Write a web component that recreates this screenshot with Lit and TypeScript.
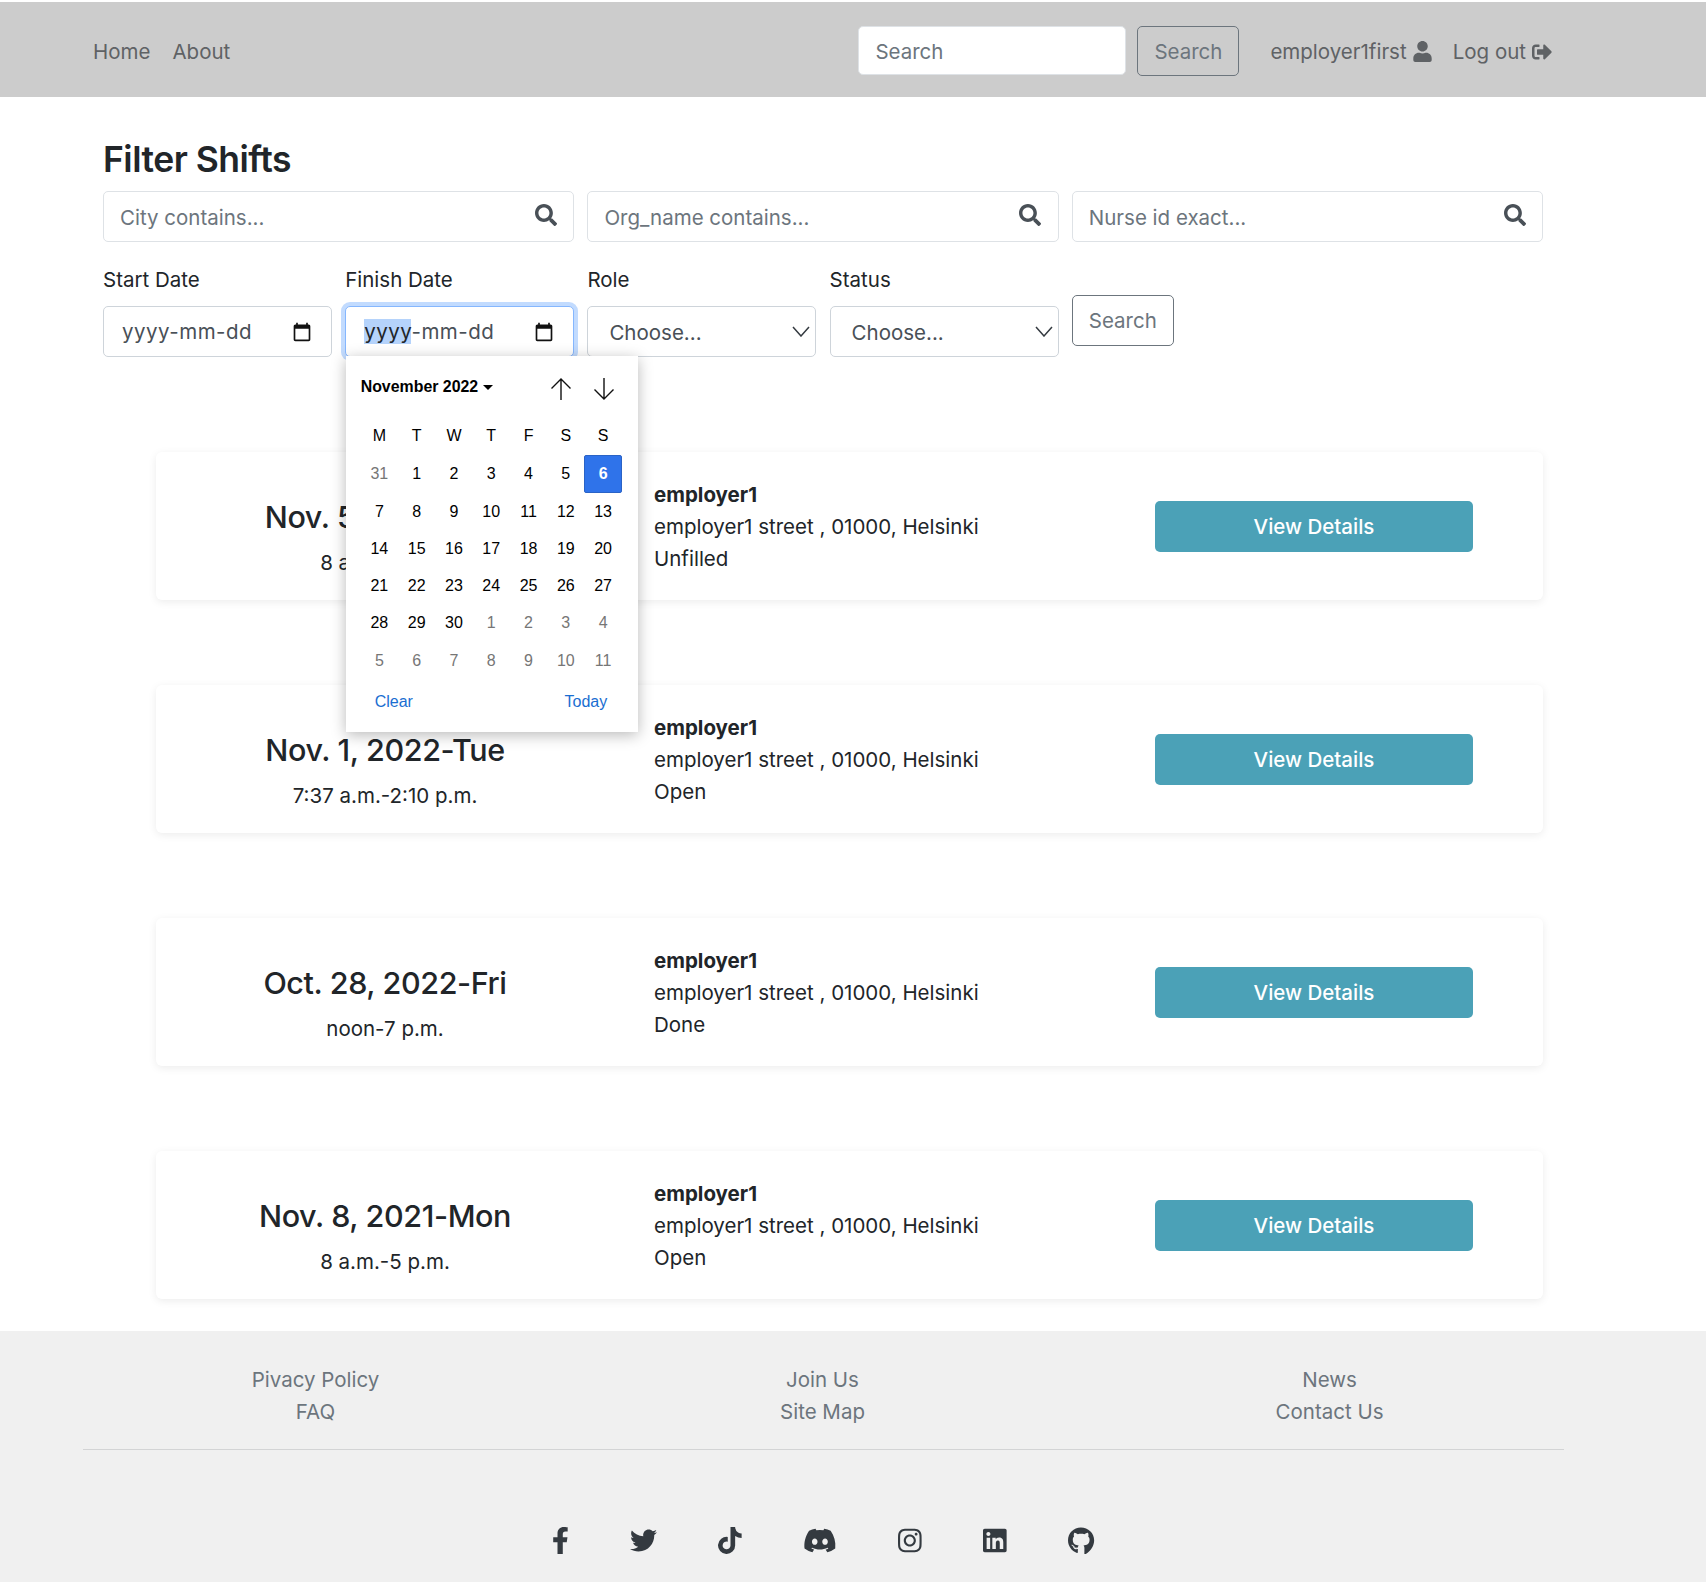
import { LitElement, css, html, svg } from "lit";
import { customElement } from "lit/decorators.js";

const SEARCH_ICON = svg`<path d="M505 442.7L405.3 343c-4.5-4.5-10.6-7-17-7H372c27.6-35.3 44-79.7 44-128C416 93.1 322.9 0 208 0S0 93.1 0 208s93.1 208 208 208c48.3 0 92.7-16.4 128-44v16.3c0 6.4 2.5 12.5 7 17l99.7 99.7c9.4 9.4 24.6 9.4 33.9 0l28.3-28.3c9.4-9.4 9.4-24.6.1-34zM208 336c-70.7 0-128-57.2-128-128 0-70.7 57.2-128 128-128 70.7 0 128 57.2 128 128 0 70.7-57.2 128-128 128z"/>`;

const SOCIALS = [
  { w: 320, d: "M279.14 288l14.22-92.66h-88.91v-60.13c0-25.35 12.42-50.06 52.24-50.06h40.42V6.26S260.43 0 225.36 0c-73.22 0-121.08 44.38-121.08 124.72v70.62H22.89V288h81.39v224h100.17V288z" },
  { w: 512, d: "M459.37 151.716c.325 4.548.325 9.097.325 13.645 0 138.72-105.583 298.558-298.558 298.558-59.452 0-114.68-17.219-161.137-47.106 8.447.974 16.568 1.299 25.34 1.299 49.055 0 94.213-16.568 130.274-44.832-46.132-.975-84.792-31.188-98.112-72.772 6.498.974 12.995 1.624 19.818 1.624 9.421 0 18.843-1.3 27.614-3.573-48.081-9.747-84.143-51.98-84.143-102.985v-1.299c13.969 7.797 30.214 12.67 47.431 13.319-28.264-18.843-46.781-51.005-46.781-87.391 0-19.492 5.197-37.36 14.294-52.954 51.655 63.675 129.3 105.258 216.365 109.807-1.624-7.797-2.599-15.918-2.599-24.04 0-57.828 46.782-104.934 104.934-104.934 30.213 0 57.502 12.67 76.67 33.137 23.715-4.548 46.456-13.32 66.599-25.34-7.798 24.366-24.366 44.833-46.132 57.827 21.117-2.273 41.584-8.122 60.426-16.243-14.292 20.791-32.161 39.308-52.628 54.253z" },
  { w: 448, d: "M448,209.91a210.06,210.06,0,0,1-122.77-39.25V349.38A162.55,162.55,0,1,1,185,188.31V278.2a74.62,74.62,0,1,0,52.23,71.18V0l88,0a121.18,121.18,0,0,0,1.86,22.17h0A122.18,122.18,0,0,0,381,102.39a121.43,121.43,0,0,0,67,20.14Z" },
  { w: 640, d: "M524.531,69.836a1.5,1.5,0,0,0-.764-.7A485.065,485.065,0,0,0,404.081,32.03a1.816,1.816,0,0,0-1.923.91,337.461,337.461,0,0,0-14.9,30.6,447.848,447.848,0,0,0-134.426,0,309.541,309.541,0,0,0-15.135-30.6,1.89,1.89,0,0,0-1.924-.91A483.689,483.689,0,0,0,116.085,69.137a1.712,1.712,0,0,0-.788.676C39.068,183.651,18.186,294.69,28.43,404.354a2.016,2.016,0,0,0,.765,1.375A487.666,487.666,0,0,0,176.02,479.918a1.9,1.9,0,0,0,2.063-.676A348.2,348.2,0,0,0,208.12,430.4a1.86,1.86,0,0,0-1.019-2.588,321.173,321.173,0,0,1-45.868-21.853,1.885,1.885,0,0,1-.185-3.126c3.082-2.309,6.166-4.711,9.109-7.137a1.819,1.819,0,0,1,1.9-.256c96.229,43.917,200.41,43.917,295.5,0a1.812,1.812,0,0,1,1.924.233c2.944,2.426,6.027,4.851,9.132,7.16a1.884,1.884,0,0,1-.162,3.126,301.407,301.407,0,0,1-45.89,21.83,1.875,1.875,0,0,0-1,2.611,391.055,391.055,0,0,0,30.014,48.815,1.864,1.864,0,0,0,2.063.7A486.048,486.048,0,0,0,610.7,405.729a1.882,1.882,0,0,0,.765-1.352C623.729,277.594,590.933,167.465,524.531,69.836ZM222.491,337.58c-28.972,0-52.844-26.587-52.844-59.239S193.056,219.1,222.491,219.1c29.665,0,53.306,26.82,52.843,59.239C275.334,310.993,251.924,337.58,222.491,337.58Zm195.38,0c-28.971,0-52.843-26.587-52.843-59.239S388.437,219.1,417.871,219.1c29.667,0,53.307,26.82,52.844,59.239C470.715,310.993,447.538,337.58,417.871,337.58Z" },
  { w: 448, d: "M224.1 141c-63.6 0-114.9 51.3-114.9 114.9s51.3 114.9 114.9 114.9S339 319.5 339 255.9 287.7 141 224.1 141zm0 189.6c-41.1 0-74.7-33.5-74.7-74.7s33.5-74.7 74.7-74.7 74.7 33.5 74.7 74.7-33.6 74.7-74.7 74.7zm146.4-194.3c0 14.9-12 26.8-26.8 26.8-14.9 0-26.8-12-26.8-26.8s12-26.8 26.8-26.8 26.8 12 26.8 26.8zm76.1 27.2c-1.7-35.9-9.9-67.7-36.2-93.9-26.2-26.2-58-34.4-93.9-36.2-37-2.1-147.9-2.1-184.9 0-35.8 1.7-67.6 9.9-93.9 36.1s-34.4 58-36.2 93.9c-2.1 37-2.1 147.9 0 184.9 1.7 35.9 9.9 67.7 36.2 93.9s58 34.4 93.9 36.2c37 2.1 147.9 2.1 184.9 0 35.9-1.7 67.7-9.9 93.9-36.2 26.2-26.2 34.4-58 36.2-93.9 2.1-37 2.1-147.8 0-184.8zM398.8 388c-7.8 19.6-22.9 34.7-42.6 42.6-29.5 11.7-99.5 9-132.1 9s-102.7 2.6-132.1-9c-19.6-7.8-34.7-22.9-42.6-42.6-11.7-29.5-9-99.5-9-132.1s-2.6-102.7 9-132.1c7.8-19.6 22.9-34.7 42.6-42.6 29.5-11.7 99.5-9 132.1-9s102.7-2.6 132.1 9c19.6 7.8 34.7 22.9 42.6 42.6 11.7 29.5 9 99.5 9 132.1s2.7 102.7-9 132.1z" },
  { w: 448, d: "M416 32H31.9C14.3 32 0 46.5 0 64.3v383.4C0 465.5 14.3 480 31.9 480H416c17.6 0 32-14.5 32-32.3V64.3c0-17.8-14.4-32.3-32-32.3zM135.4 416H69V202.2h66.5V416zm-33.2-243c-21.3 0-38.5-17.3-38.5-38.5S80.9 96 102.2 96c21.2 0 38.5 17.3 38.5 38.5 0 21.3-17.2 38.5-38.5 38.5zm282.1 243h-66.4V312c0-24.8-.5-56.7-34.5-56.7-34.6 0-39.9 27-39.9 54.9V416h-66.4V202.2h63.7v29.2h.9c8.9-16.8 30.6-34.5 62.9-34.5 67.2 0 79.7 44.3 79.7 101.9V416z" },
  { w: 496, d: "M165.9 397.4c0 2-2.3 3.6-5.2 3.6-3.3 0-5.6-1.6-5.6-3.6 0-2 2.3-3.6 5.2-3.6 3-.3 5.6 1.3 5.6 3.6zm-31.1-4.5c-.7 2 1.3 4.3 4.3 4.9 2.6 1 5.6 0 6.2-2s-1.3-4.3-4.3-5.2c-2.6-.7-5.5.3-6.2 2.3zm44.2-1.7c-2.9.7-4.9 2.6-4.6 4.9.3 2 2.9 3.3 5.9 2.6 2.9-.7 4.9-2.6 4.6-4.6-.3-1.9-3-3.2-5.9-2.9zM244.8 8C106.1 8 0 113.3 0 252c0 110.9 69.8 205.8 169.5 239.2 12.8 2.3 17.3-5.6 17.3-12.1 0-6.2-.3-40.4-.3-61.4 0 0-70 15-84.7-29.8 0 0-11.4-29.1-27.8-36.6 0 0-22.9-15.7 1.6-15.4 0 0 24.9 2 38.6 25.8 21.9 38.6 58.6 27.5 72.9 20.9 2.3-16 8.8-27.1 16-33.7-55.9-6.2-112.3-14.3-112.3-110.5 0-27.5 7.6-41.3 23.6-58.9-2.6-6.5-11.1-33.3 2.6-67.9 20.9-6.5 69 27 69 27 20-5.6 41.5-8.5 62.8-8.5s42.8 2.9 62.8 8.5c0 0 48.1-33.6 69-27 13.7 34.7 5.2 61.4 2.6 67.9 16 17.7 25.8 31.5 25.8 58.9 0 96.5-58.9 104.2-114.8 110.5 9.2 7.9 17 22.9 17 52.6 0 42.4-.4 94.9-.4 105.2 0 6.5 4.6 14.4 17.3 12.1C428.2 457.8 496 362.9 496 252 496 113.3 383.5 8 244.8 8zM97.2 352.9c-1.3 1-1 3.3.7 5.2 1.6 1.6 3.9 2.3 5.2 1 1.3-1 1-3.3-.7-5.2-1.6-1.6-3.9-2.3-5.2-1zm-10.8-8.1c-.7 1.3.3 2.9 2.3 3.9 1.6 1 3.6.7 4.3-.7.7-1.3-.3-2.9-2.3-3.9-2-.6-3.6-.3-4.3.7zm32.4 35.6c-1.6 1.3-1 4.3 1.3 6.2 2.3 2.3 5.2 2.6 6.5 1 1.3-1.3.7-4.3-1.3-6.2-2.2-2.3-5.2-2.6-6.5-1zm-11.4-14.7c-1.6 1-1.6 3.6 0 5.9 1.6 2.3 4.3 3.3 5.6 2.3 1.6-1.3 1.6-3.9 0-6.2-1.4-2.3-4-3.3-5.6-2z" },
];

const SHIFTS = [
  { date: "Nov. 5, 2022-Sat", time: "8 a.m.-5 p.m.", status: "Unfilled" },
  { date: "Nov. 1, 2022-Tue", time: "7:37 a.m.-2:10 p.m.", status: "Open" },
  { date: "Oct. 28, 2022-Fri", time: "noon-7 p.m.", status: "Done" },
  { date: "Nov. 8, 2021-Mon", time: "8 a.m.-5 p.m.", status: "Open" },
];

const WEEK_DAYS = ["M", "T", "W", "T", "F", "S", "S"];

// month grid of the open picker, "muted" days belong to the month next door
const CAL_DAYS = [
  [31, 1, 2, 3, 4, 5, 6],
  [7, 8, 9, 10, 11, 12, 13],
  [14, 15, 16, 17, 18, 19, 20],
  [21, 22, 23, 24, 25, 26, 27],
  [28, 29, 30, 1, 2, 3, 4],
  [5, 6, 7, 8, 9, 10, 11],
];

const isMuted = (row: number, day: number) => (row === 0 && day > 7) || (row >= 4 && day < 20);

@customElement("app-root")
export class AppRoot extends LitElement {
  static override styles = css`
    :host {
      display: block;
      font-family: Inter, "Liberation Sans", sans-serif;
      font-size: 20.5px;
      line-height: 32px;
      color: #212529;
      background: #fff;
    }

    * {
      box-sizing: border-box;
    }

    .navbar {
      margin-top: 2px;
      height: 95px;
      background: #ccc;
      padding: 25px 154px 21px 93px;
      display: flex;
      align-items: center;
      color: #5f6265;
    }

    .nav-left {
      display: flex;
      gap: 22px;
    }

    .nav-right {
      margin-left: auto;
      display: flex;
      align-items: center;
    }

    .nav-search {
      width: 268px;
      height: 49px;
      border: 1px solid #dee2e6;
      border-radius: 5px;
      background: #fff;
      padding-top: 2px;
      margin: 0 11px 3px 0;
    }

    .nav-btn {
      width: 102px;
      height: 50px;
      border: 1px solid #6c757d;
      background: transparent;
      padding-top: 2px;
      margin: 0 31px 2px 0;
    }

    .nav-user {
      display: flex;
      align-items: center;
      gap: 6px;
      margin-right: 21px;
    }

    .nav-user svg {
      width: 19px;
      height: 21px;
      fill: currentColor;
    }

    .nav-user:last-child {
      margin-right: 0;
    }

    .nav-user:last-child svg {
      width: 20px;
      height: 20px;
    }

    input,
    button,
    select {
      font: inherit;
      color: inherit;
    }

    input {
      padding: 0 16px;
      outline: none;
      min-width: 0;
    }

    input::placeholder {
      color: #6c757d;
      opacity: 1;
    }

    button {
      border-radius: 5px;
      color: #6c757d;
      padding: 0;
    }

    main {
      width: 1440px;
      margin-left: 103px;
      padding-top: 37px;
    }

    h2 {
      margin: 0;
      font-size: 35.5px;
      line-height: 52px;
      font-weight: 600;
      letter-spacing: -0.5px;
    }

    .filters {
      display: grid;
      grid-template-columns: repeat(6, 1fr);
      column-gap: 13.2px;
      margin-top: 5px;
    }

    .input-group {
      grid-column: span 2;
      height: 51px;
      display: flex;
      border: 1px solid #dee2e6;
      border-radius: 5px;
    }

    .input-group input {
      flex: 1;
      border: 0;
      background: transparent;
      padding-top: 2px;
    }

    .input-group button {
      width: 55px;
      border: 0;
      background: transparent;
      color: #495057;
      display: flex;
      align-items: center;
      justify-content: center;
    }

    .input-group svg {
      width: 22px;
      height: 22px;
      fill: currentColor;
      margin-bottom: 3px;
    }

    .field {
      margin-top: 21px;
      position: relative;
    }

    .field label {
      display: block;
      height: 43px;
      line-height: 34px;
    }

    .control {
      height: 51px;
      border: 1px solid #ced4da;
      border-radius: 5px;
      background: #fff;
      display: flex;
      align-items: center;
      justify-content: space-between;
      padding: 0 19px 0 18px;
      color: #495057;
      letter-spacing: 0.5px;
    }

    .control.focused {
      border-color: #86b7fe;
      box-shadow: 0 0 0 4px rgba(13, 110, 253, 0.25);
      position: relative;
    }

    .control mark {
      background: #b5d3fb;
      color: #212529;
      line-height: 28px;
    }

    .control svg {
      width: 20px;
      height: 20px;
      fill: #111;
    }

    select {
      width: 100%;
      height: 51px;
      border: 1px solid #ced4da;
      border-radius: 5px;
      background: #fff;
      appearance: none;
      padding: 2px 21px 0;
      color: #495057;
      display: block;
    }

    .chevron {
      position: absolute;
      right: 6px;
      bottom: 20px;
      width: 18px;
      height: 11px;
      fill: none;
      stroke: #343a40;
      stroke-width: 1.5;
    }

    .filter-btn {
      align-self: start;
      justify-self: start;
      width: 102px;
      height: 51px;
      margin-top: 53px;
      border: 1px solid #6c757d;
      background: #fff;
      padding-top: 1px;
    }

    .calendar {
      position: absolute;
      left: 1px;
      top: 93px;
      width: 292px;
      height: 376px;
      background: #fff;
      box-shadow: 0 3px 14px rgba(0, 0, 0, 0.28);
      font-family: "Liberation Sans", Arial, sans-serif;
      color: #000;
      z-index: 5;
      padding: 14px 16px 0 14.5px;
    }

    .cal-head {
      display: flex;
      align-items: center;
      height: 34px;
    }

    .cal-title {
      font-size: 15.9px;
      font-weight: 700;
      display: flex;
      align-items: center;
      gap: 5px;
    }

    .caret {
      width: 0;
      height: 0;
      border-left: 5px solid transparent;
      border-right: 5px solid transparent;
      border-top: 5px solid #000;
    }

    .cal-arrows {
      margin: 4px 0 0 auto;
      display: flex;
      gap: 21px;
      padding-right: 7px;
    }

    .cal-arrows svg {
      width: 22px;
      height: 24px;
      fill: none;
      stroke: #111;
      stroke-width: 1.4;
    }

    .cal-grid {
      display: grid;
      grid-template-columns: repeat(7, 37.3px);
      grid-auto-rows: 37.3px;
      margin-top: 14px;
      font-size: 16px;
      text-align: center;
      line-height: 37.3px;
    }

    .cal-grid .dow {
      line-height: 35px;
    }

    .cal-grid .muted {
      color: #767676;
    }

    .cal-grid .today {
      background: #2f73ea;
      border: 1px solid #2a63c6;
      border-radius: 2px;
      color: #fff;
      font-weight: 700;
      line-height: 35px;
    }

    .cal-foot {
      display: flex;
      justify-content: space-between;
      padding: 0 15px 0 14px;
      margin-top: 7px;
      font-size: 16px;
      color: #1a6ed1;
    }

    .shifts {
      width: 1387px;
      margin-left: 53px;
      margin-top: 95px;
      display: flex;
      flex-direction: column;
      gap: 85px;
    }

    .card {
      height: 148px;
      border-radius: 6px;
      background: #fff;
      box-shadow: 0 2px 8px rgba(0, 0, 0, 0.08);
      display: grid;
      grid-template-columns: 458px 469px 1fr;
      align-items: center;
    }

    .when {
      text-align: center;
      padding-top: 22px;
    }

    .when h3 {
      margin: 0;
      font-size: 30.5px;
      line-height: 44px;
      font-weight: 500;
      letter-spacing: -0.4px;
    }

    .when p {
      margin: 8px 0 0;
    }

    .where {
      padding: 2px 0 0 40px;
    }

    .where b {
      display: block;
      font-weight: 700;
    }

    .where div {
      white-space: nowrap;
    }

    .view {
      justify-self: center;
      width: 318px;
      height: 51px;
      margin-left: 2px;
      padding-top: 2px;
      border: 0;
      background: #4ba1b7;
      color: #fff;
      font-weight: 500;
    }

    footer {
      margin-top: 32px;
      height: 251px;
      background: #f0f0f0;
      width: 100%;
      padding: 33px 0 0 62px;
      color: #6c757d;
    }

    .foot-links {
      width: 1521px;
      display: grid;
      grid-template-columns: repeat(3, 1fr);
      text-align: center;
    }

    footer hr {
      width: 1481px;
      margin: 21px 0 0 21px;
      border: 0;
      border-top: 1px solid #d3d4d5;
    }

    .socials {
      margin: 77px 0 0 489.5px;
      display: flex;
      gap: 61.4px;
      color: #343a40;
    }

    .socials svg {
      height: 27px;
      fill: currentColor;
      display: block;
    }
  `;

  private renderCalendar() {
    return html`
      <div class="calendar">
        <div class="cal-head">
          <div class="cal-title">November 2022 <span class="caret"></span></div>
          <div class="cal-arrows">
            <svg viewBox="0 0 22 24"><path d="M11 23V2M1.5 11.5 11 2l9.5 9.5" /></svg>
            <svg viewBox="0 0 22 24"><path d="M11 1v21M1.5 12.5 11 22l9.5-9.5" /></svg>
          </div>
        </div>
        <div class="cal-grid">
          ${WEEK_DAYS.map((d) => html`<div class="dow">${d}</div>`)}
          ${CAL_DAYS.map((week, row) =>
            week.map((day) => {
              const selected = row === 0 && day === 6;
              return html`<div class="${isMuted(row, day) ? "muted" : ""} ${selected ? "today" : ""}">${day}</div>`;
            }),
          )}
        </div>
        <div class="cal-foot"><span>Clear</span><span>Today</span></div>
      </div>
    `;
  }

  private renderCalIcon() {
    return html`<svg viewBox="0 0 24 24">
      <path d="M20 3h-1V1h-2v2H7V1H5v2H4c-1.1 0-2 .9-2 2v16c0 1.1.9 2 2 2h16c1.1 0 2-.9 2-2V5c0-1.1-.9-2-2-2zm0 18H4V8h16v13z" />
    </svg>`;
  }

  private renderSearchGroup(placeholder: string) {
    return html`
      <div class="input-group">
        <input placeholder=${placeholder} />
        <button type="button"><svg viewBox="0 0 512 512">${SEARCH_ICON}</svg></button>
      </div>
    `;
  }

  override render() {
    return html`
      <nav class="navbar">
        <div class="nav-left"><span>Home</span><span>About</span></div>
        <div class="nav-right">
          <input class="nav-search" placeholder="Search" />
          <button type="button" class="nav-btn">Search</button>
          <span class="nav-user">
            employer1first
            <svg viewBox="0 0 448 512">
              <path d="M224 256c70.7 0 128-57.3 128-128S294.7 0 224 0 96 57.3 96 128s57.3 128 128 128zm89.6 32h-16.7c-22.2 10.2-46.9 16-72.9 16s-50.6-5.8-72.9-16h-16.7C60.2 288 0 348.2 0 422.4V464c0 26.5 21.5 48 48 48h352c26.5 0 48-21.5 48-48v-41.6c0-74.2-60.2-134.4-134.4-134.4z" />
            </svg>
          </span>
          <span class="nav-user">
            Log out
            <svg viewBox="0 0 512 512">
              <path d="M497 273L329 441c-15 15-41 4.5-41-17v-96H152c-13.3 0-24-10.7-24-24v-96c0-13.3 10.7-24 24-24h136V88c0-21.4 25.9-32 41-17l168 168c9.3 9.4 9.3 24.6 0 34zM192 436v-40c0-6.6-5.4-12-12-12H96c-17.7 0-32-14.3-32-32V160c0-17.7 14.3-32 32-32h84c6.6 0 12-5.4 12-12V76c0-6.6-5.4-12-12-12H96c-53 0-96 43-96 96v192c0 53 43 96 96 96h84c6.6 0 12-5.4 12-12z" />
            </svg>
          </span>
        </div>
      </nav>

      <main>
        <h2>Filter Shifts</h2>
        <div class="filters">
          ${this.renderSearchGroup("City contains...")} ${this.renderSearchGroup("Org_name contains...")}
          ${this.renderSearchGroup("Nurse id exact...")}

          <div class="field">
            <label>Start Date</label>
            <div class="control"><span>yyyy-mm-dd</span>${this.renderCalIcon()}</div>
          </div>
          <div class="field">
            <label>Finish Date</label>
            <div class="control focused"><span><mark>yyyy</mark>-mm-dd</span>${this.renderCalIcon()}</div>
            ${this.renderCalendar()}
          </div>
          <div class="field">
            <label>Role</label>
            <select><option>Choose...</option></select>
            <svg class="chevron" viewBox="0 0 18 11"><path d="M1 1l8 9 8-9" /></svg>
          </div>
          <div class="field">
            <label>Status</label>
            <select><option>Choose...</option></select>
            <svg class="chevron" viewBox="0 0 18 11"><path d="M1 1l8 9 8-9" /></svg>
          </div>
          <button type="button" class="filter-btn">Search</button>
        </div>

        <div class="shifts">
          ${SHIFTS.map(
            (s) => html`
              <div class="card">
                <div class="when">
                  <h3>${s.date}</h3>
                  <p>${s.time}</p>
                </div>
                <div class="where">
                  <b>employer1</b>
                  <div>employer1 street , 01000, Helsinki</div>
                  <div>${s.status}</div>
                </div>
                <button type="button" class="view">View Details</button>
              </div>
            `,
          )}
        </div>
      </main>

      <footer>
        <div class="foot-links">
          <div>Pivacy Policy<br />FAQ</div>
          <div>Join Us<br />Site Map</div>
          <div>News<br />Contact Us</div>
        </div>
        <hr />
        <div class="socials">
          ${SOCIALS.map((i) => html`<svg viewBox="0 0 ${i.w} 512" style="width:${(i.w / 512) * 27}px">${svg`<path d=${i.d} />`}</svg>`)}
        </div>
      </footer>
    `;
  }
}
